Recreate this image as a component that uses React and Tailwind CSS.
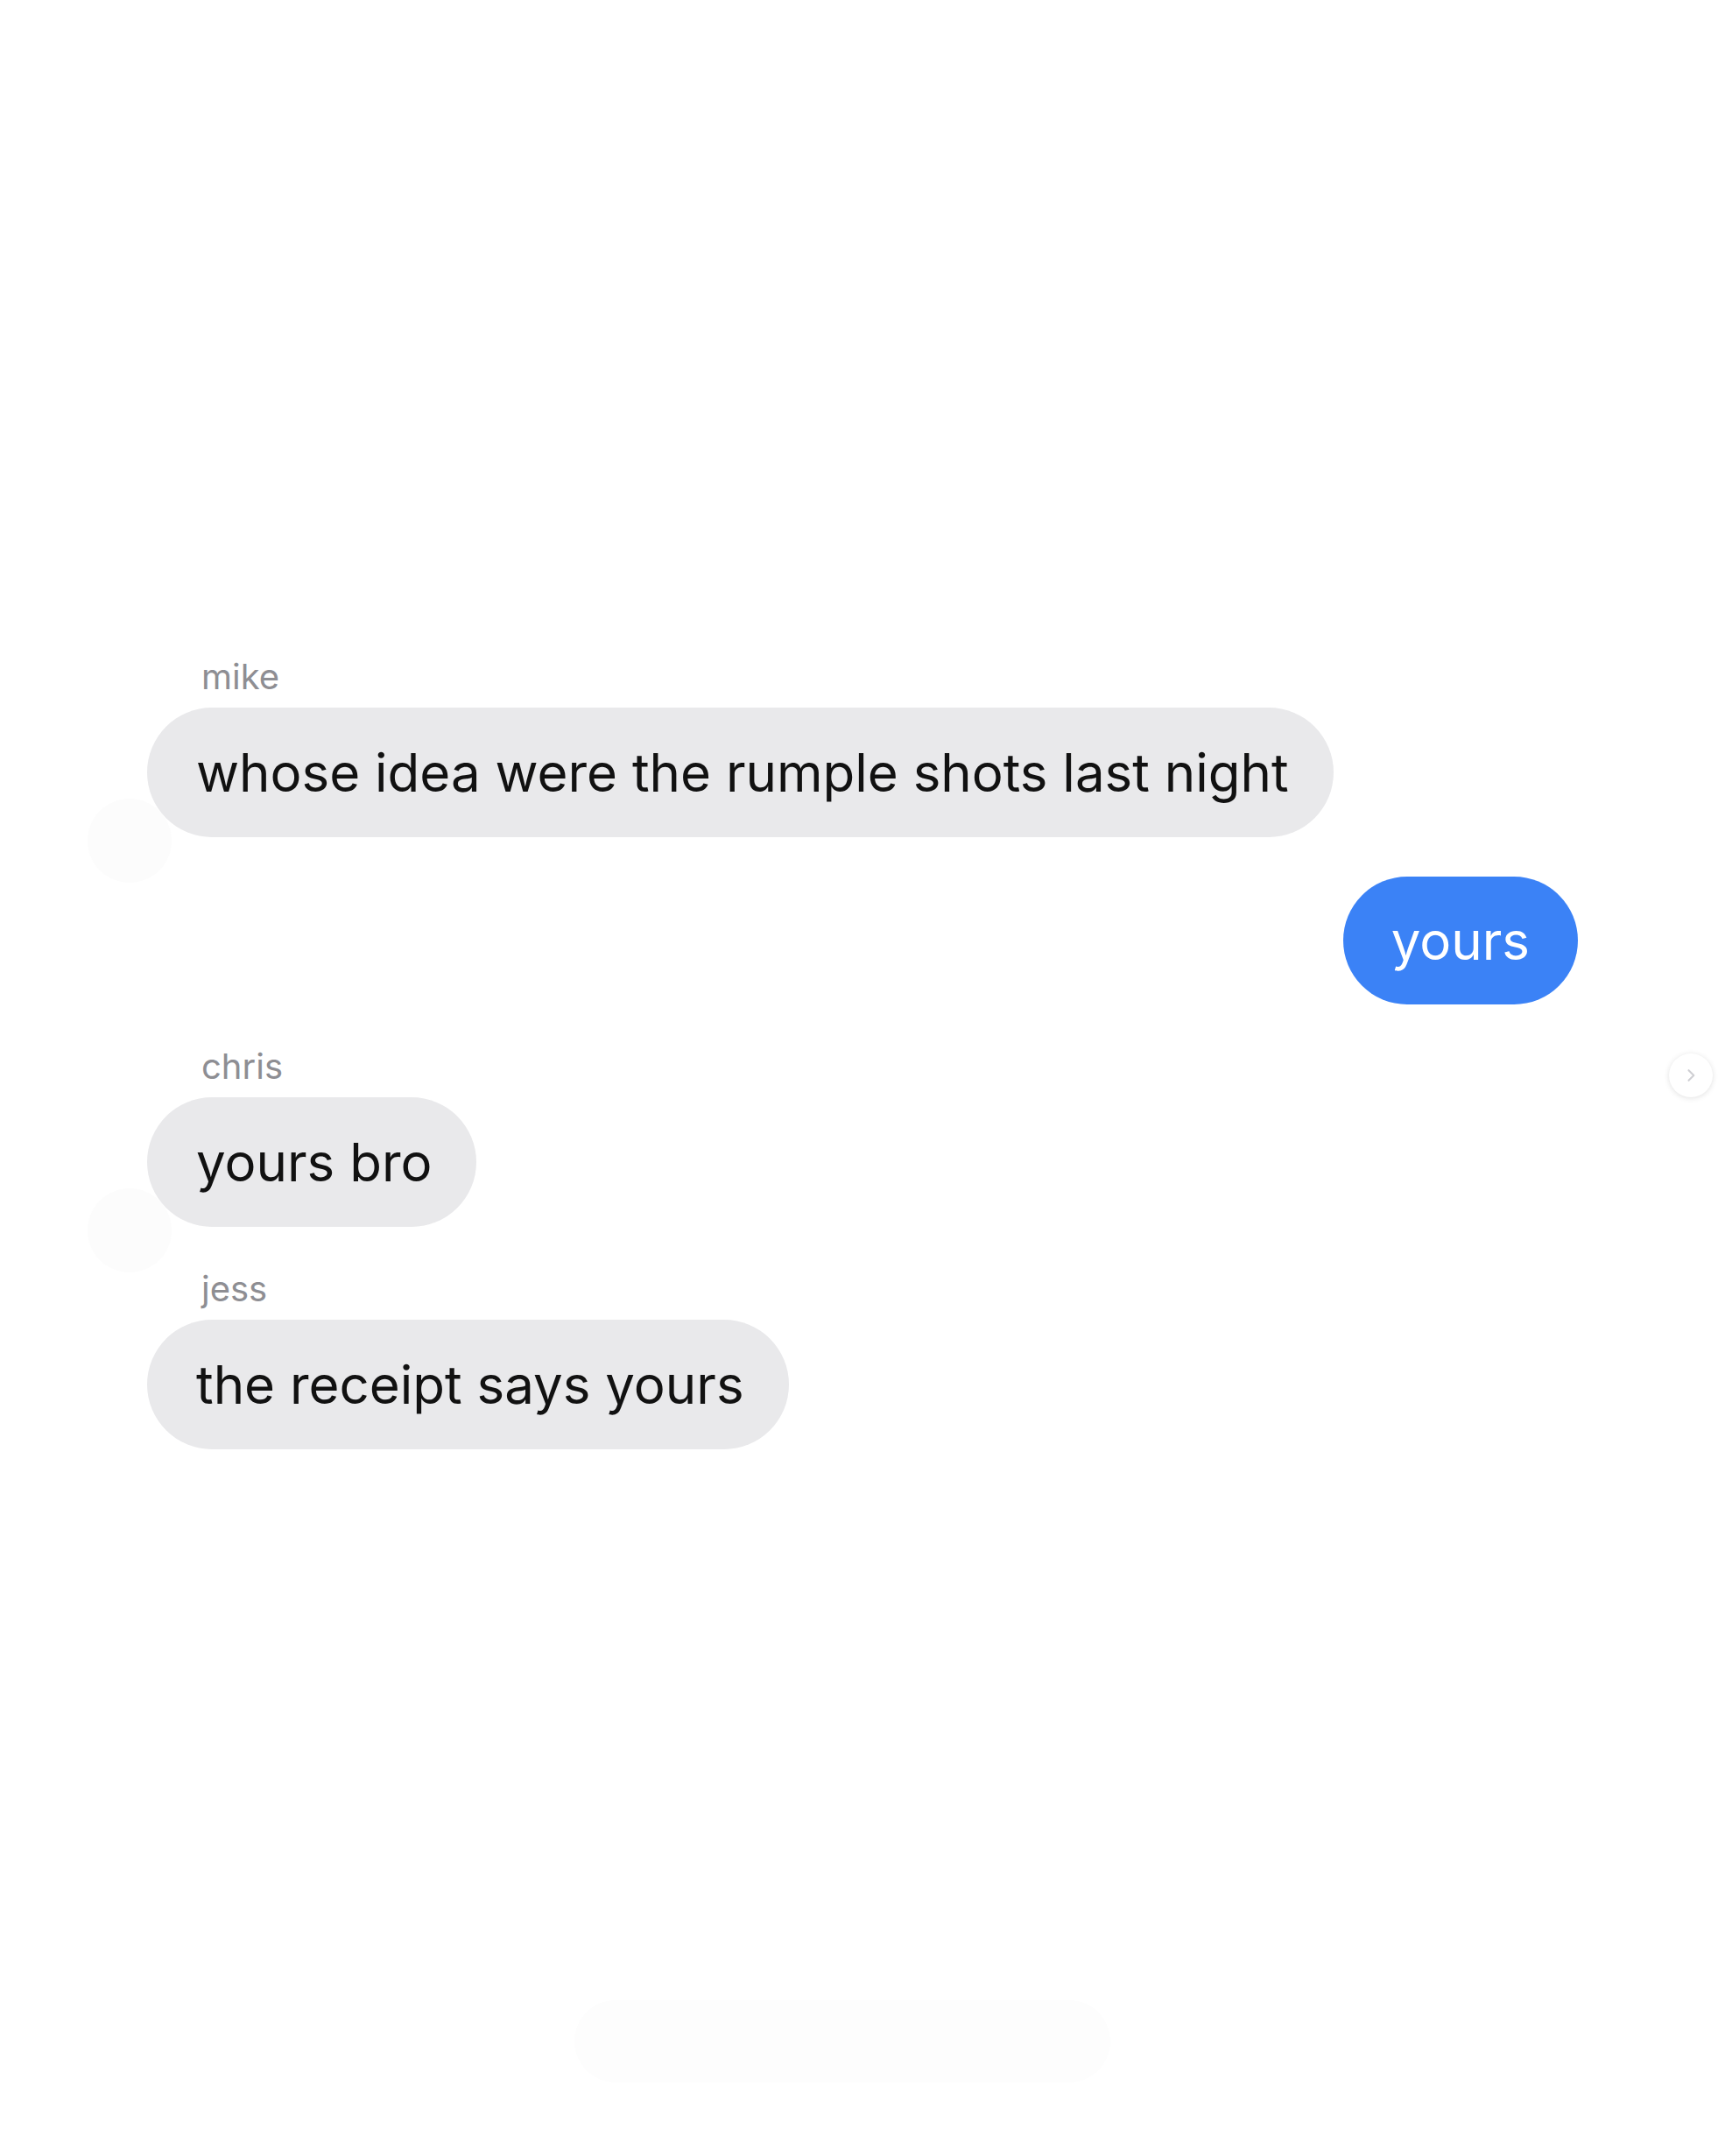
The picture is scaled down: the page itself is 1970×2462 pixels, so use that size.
import React from "react";

const messages = [
  { id: 1, from: "mike", text: "whose idea were the rumple shots last night", avatar: true },
  { id: 2, from: "me", text: "yours" },
  { id: 3, from: "chris", text: "yours bro", avatar: true },
  { id: 4, from: "jess", text: "the receipt says yours" },
];

const Bubble = ({ msg }) => {
  if (msg.from === "me") {
    return (
      <div className="flex justify-end mt-[45px]">
        <div className="bg-[#3b82f6] text-white text-[60px] leading-[72px] px-[55px] py-[37px] rounded-full">
          {msg.text}
        </div>
      </div>
    );
  }

  return (
    <div className="flex flex-col items-start mt-[48px] first:mt-0">
      <span className="pl-[62px] text-[40px] leading-[46px] text-[#8e8e93]">
        {msg.from}
      </span>
      <div className="relative mt-[12px]">
        {msg.avatar && (
          <div className="absolute -left-[68px] -bottom-[52px] w-[96px] h-[96px] rounded-full bg-[#fcfcfc]" />
        )}
        <div className="relative bg-[#e9e9eb] text-[#111111] text-[60px] leading-[72px] pl-[56px] pr-[51px] py-[38px] rounded-full">
          {msg.text}
        </div>
      </div>
    </div>
  );
};

const App = () => {
  return (
    <div
      className="relative w-full h-[2462px] bg-white overflow-hidden"
      style={{ fontFamily: "Inter, 'Noto Sans', sans-serif" }}
    >
      <div className="px-[168px] pt-[750px] flex flex-col">
        {messages.map((m) => (
          <Bubble key={m.id} msg={m} />
        ))}
      </div>

      <button className="absolute left-[1906px] top-[1203px] w-[50px] h-[50px] rounded-full bg-white shadow-[0_1px_6px_rgba(0,0,0,0.12)] flex items-center justify-center">
        <svg width="20" height="20" viewBox="0 0 24 24" fill="none" stroke="#cfcfd3" strokeWidth="2.5" strokeLinecap="round" strokeLinejoin="round">
          <path d="M9 5l7 7-7 7" />
        </svg>
      </button>

      <div className="absolute left-[656px] top-[2284px] w-[612px] h-[94px] rounded-full bg-[#fdfdfd]" />
    </div>
  );
};

export default App;
